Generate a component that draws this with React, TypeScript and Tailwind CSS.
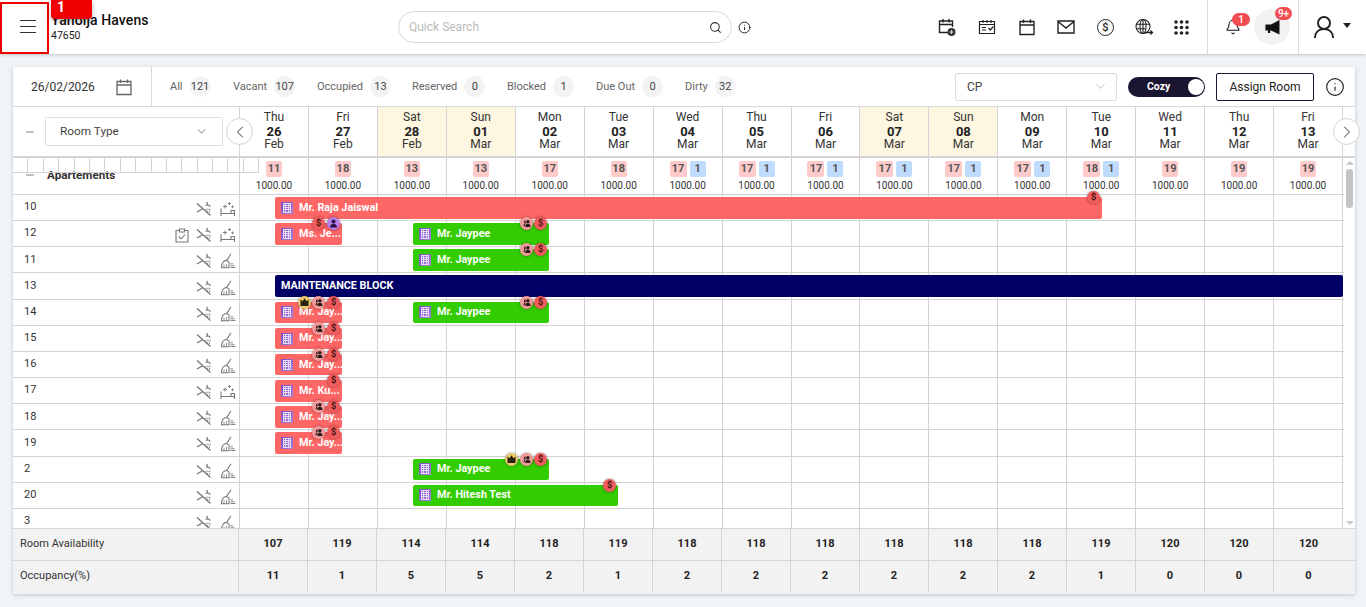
import React from "react";
import { ChevronDown, ChevronLeft, ChevronRight, Search, Info, Bell, Minus } from "lucide-react";

const days = [
  ["Thu", "26", "Feb"], ["Fri", "27", "Feb"], ["Sat", "28", "Feb"], ["Sun", "01", "Mar"],
  ["Mon", "02", "Mar"], ["Tue", "03", "Mar"], ["Wed", "04", "Mar"], ["Thu", "05", "Mar"],
  ["Fri", "06", "Mar"], ["Sat", "07", "Mar"], ["Sun", "08", "Mar"], ["Mon", "09", "Mar"],
  ["Tue", "10", "Mar"], ["Wed", "11", "Mar"], ["Thu", "12", "Mar"], ["Fri", "13", "Mar"],
];
const pink = [11, 18, 13, 13, 17, 18, 17, 17, 17, 17, 17, 17, 18, 19, 19, 19];
const blue = [0, 0, 0, 0, 0, 0, 1, 1, 1, 1, 1, 1, 1, 0, 0, 0];
const avail = [107, 119, 114, 114, 118, 119, 118, 118, 118, 118, 118, 118, 119, 120, 120, 120];
const occ = [11, 1, 5, 5, 2, 1, 2, 2, 2, 2, 2, 2, 1, 0, 0, 0];

type BadgeKind = "crown" | "people" | "dollar" | "guest";
type Bar = { name: string; color: "red" | "green" | "navy"; pos: string; badges: [BadgeKind, string][] };
type Row = { no: string; clean: "bed" | "broom"; clip?: boolean; bars: Bar[] };

const jaypee = (badges: [BadgeKind, string][]): Bar => ({
  name: "Mr. Jaypee", color: "green", pos: "left-[400px] w-[136px]", badges,
});
const short = (name: string, badges: [BadgeKind, string][]): Bar => ({
  name, color: "red", pos: "left-[262px] w-[67px]", badges,
});
const pd: [BadgeKind, string][] = [["people", "left-[37px]"], ["dollar", "left-[52px]"]];
const jpd: [BadgeKind, string][] = [["people", "left-[107px]"], ["dollar", "left-[121px]"]];

const rows: Row[] = [
  { no: "10", clean: "bed", bars: [{ name: "Mr. Raja Jaiswal", color: "red", pos: "left-[262px] w-[827px]", badges: [["dollar", "left-[812px]"]] }] },
  { no: "12", clean: "bed", clip: true, bars: [short("Ms. Je...", [["dollar", "left-[37px]"], ["guest", "left-[52px]"]]), jaypee(jpd)] },
  { no: "11", clean: "broom", bars: [jaypee(jpd)] },
  { no: "13", clean: "broom", bars: [{ name: "MAINTENANCE BLOCK", color: "navy", pos: "left-[262px] w-[1068px]", badges: [] }] },
  { no: "14", clean: "broom", bars: [short("Mr. Jay...", [["crown", "left-[23px]"], ...pd]), jaypee(jpd)] },
  { no: "15", clean: "broom", bars: [short("Mr. Jay...", pd)] },
  { no: "16", clean: "broom", bars: [short("Mr. Jay...", pd)] },
  { no: "17", clean: "bed", bars: [short("Mr. Ku...", [["dollar", "left-[52px]"]])] },
  { no: "18", clean: "broom", bars: [short("Mr. Jay...", pd)] },
  { no: "19", clean: "broom", bars: [short("Mr. Jay...", pd)] },
  { no: "2", clean: "broom", bars: [jaypee([["crown", "left-[92px]"], ...jpd])] },
  { no: "20", clean: "broom", bars: [{ name: "Mr. Hitesh Test", color: "green", pos: "left-[400px] w-[205px]", badges: [["dollar", "left-[190px]"]] }] },
  { no: "3", clean: "broom", bars: [] },
];

const barColor = { red: "bg-[#ff6666]", green: "bg-[#33cc00]", navy: "bg-[#000066]" };

function CalPlus() {
  return (
    <svg width="20" height="20" viewBox="0 0 20 20" fill="none" stroke="#222" strokeWidth="1.4">
      <path d="M11 15.500H2.500V4h13v6M2.500 7.500h13M6 2v3.500M12 2v3.500" />
      <circle cx="14.500" cy="15" r="4" fill="#333" stroke="none" />
      <path d="M12.500 15h4M14.500 13v4" stroke="#ddd" strokeWidth="1" />
    </svg>
  );
}
function CalCheck() {
  return (
    <svg width="18" height="16" viewBox="0 0 18 16" fill="none" stroke="#222" strokeWidth="1.2">
      <path d="M1.500 2.500h15v12h-15zM1.500 5.500h15M5 1v3M9 1v3M13 1v3" />
      <path d="M4 8.500h4M4 11h4M10.500 9l1.800 2 3-3.500" />
    </svg>
  );
}
function Cal({ size = 18, color = "#222", sw = 1.4 }: { size?: number; color?: string; sw?: number }) {
  return (
    <svg width={size} height={size} viewBox="0 0 18 18" fill="none" stroke={color} strokeWidth={sw}>
      <path d="M2 3.500h14v13H2zM2 7h14M5.500 1.500v3.500M12.500 1.500v3.500" />
    </svg>
  );
}
function Mail() {
  return (
    <svg width="18" height="14" viewBox="0 0 18 14" fill="none" stroke="#222" strokeWidth="1.4">
      <path d="M1 1h16v12H1zM1 1.500l8 6.500 8-6.500" />
    </svg>
  );
}
function Globe() {
  return (
    <svg width="20" height="20" viewBox="0 0 20 20" fill="none" stroke="#222" strokeWidth="1.1">
      <circle cx="9" cy="9.500" r="7" />
      <ellipse cx="9" cy="9.500" rx="3" ry="7" />
      <path d="M9 2.500v14M2.300 7.200h13.400M2.300 11.800h9" />
      <path d="M11 15.500h7.500M16.500 13.500l2 2-2 2" strokeWidth="1.300" fill="#fff" />
    </svg>
  );
}
function Dots() {
  const c = [2, 7.500, 13];
  return (
    <svg width="15" height="15" viewBox="0 0 15 15" fill="#222">
      {c.map((y) => c.map((x) => <circle key={`${x}-${y}`} cx={x} cy={y} r="1.800" />))}
    </svg>
  );
}
function Megaphone() {
  return (
    <svg width="15" height="15" viewBox="0 0 15 15" fill="#111">
      <path d="M14.500 0v14.500L6 10.500H5.200V13H3v-2.500H1A.6.6 0 0 1 .4 10V5a.6.6 0 0 1 .6-.6h5z" />
    </svg>
  );
}
function User() {
  return (
    <svg width="22" height="24" viewBox="0 0 22 24" fill="none" stroke="#222" strokeWidth="2">
      <circle cx="11" cy="8" r="6" />
      <path d="M2 23c0-5.500 3.500-9 9-9s9 3.500 9 9" />
    </svg>
  );
}
function NoSmoke() {
  return (
    <svg width="16" height="16" viewBox="0 0 16 16" fill="none" stroke="#777" strokeWidth="1.300">
      <path d="M1 2.500l13.500 12M1 11l6-3.500" />
      <path d="M11.500 1c-1.500 1 .5 1.700-.5 3 1.300-.3 3 .3 3 1.700" />
      <path d="M9.500 8.500h5M11 11h3.500" strokeDasharray="1 1" />
    </svg>
  );
}
function BedSpark() {
  return (
    <svg width="16" height="16" viewBox="0 0 16 16" fill="none" stroke="#777" strokeWidth="1.050">
      <path d="M1 7.500V15M1 12.500h13.500V15M11 12.500V9.500h3.500v3" />
      <path d="M5 3.500v4M3 5.500h4M9.500 1v3M8 2.500h3M12.500 4.500v2.600M11.200 5.800h2.600" strokeWidth=".9" />
    </svg>
  );
}
function Broom() {
  return (
    <svg width="16" height="16" viewBox="0 0 16 16" fill="none" stroke="#777" strokeWidth="1.050">
      <path d="M11 .8L6.600 7.600" />
      <path d="M1.500 14.700c0-4 2-7.300 5-7.300l2.500 1.600v5.700z" />
      <path d="M4 14.500v-3M6.500 14.500v-3.500" strokeWidth=".8" />
      <path d="M10.500 10.800h2.500M10.500 12.800h4M10.500 14.500h5" strokeWidth=".9" />
    </svg>
  );
}
function Clipboard() {
  return (
    <svg width="14" height="15" viewBox="0 0 14 15" fill="none" stroke="#777" strokeWidth="1.100">
      <path d="M4.500 2.500H1v11.500h12V2.500H9.500M4.500 1h5v3h-5z" />
      <path d="M3.800 8.500l2.300 2.300 4-4.300" />
    </svg>
  );
}
function Building() {
  return (
    <span className="flex h-[12px] w-[12px] shrink-0 items-center justify-center rounded-[1px] bg-gradient-to-br from-[#7a4cc4] to-[#a583dc]">
      <svg width="8" height="10" viewBox="0 0 8 10" fill="#e6dcf5">
        <path d="M0 0h8v10H0zM1 1v1h1V1zm2 0v1h2V1zm3 0v1h1V1zM1 3v1h1V3zm2 0v1h2V3zm3 0v1h1V3zM1 5v1h1V5zm2 0v1h2V5zm3 0v1h1V5zM1 7v2h1V7zm2 0v2h2V7zm3 0v2h1V7z" fillRule="evenodd" />
      </svg>
    </span>
  );
}
function Badge({ kind, pos }: { kind: BadgeKind; pos: string }) {
  const bg = {
    dollar: "bg-[#f25b5b]",
    people: "bg-[#f29a9a]",
    crown: "bg-[#ecc96c]",
    guest: "bg-[#b77fe8]",
  }[kind];
  return (
    <span className={`absolute top-[-6px] flex h-[13px] w-[13px] items-center justify-center rounded-full shadow-[0_0_3px_rgba(0,0,0,0.45)] ${bg} ${pos}`}>
      {kind === "dollar" && <span className="text-[9px] leading-none font-bold text-[#3a1414]">$</span>}
      {kind === "people" && (
        <svg width="8" height="7" viewBox="0 0 9 8" fill="#2a1a1a">
          <circle cx="5.500" cy="2" r="1.900" />
          <path d="M2.500 8c0-2.500 1-3.700 3-3.700S8.500 5.500 8.500 8z" />
          <path d="M3 .6A1.700 1.700 0 0 0 2.500 4C1.200 4.300.5 5.500.5 7H2c0-1.500.4-2.700 1.300-3.500A2.600 2.600 0 0 1 3 .6z" />
        </svg>
      )}
      {kind === "crown" && (
        <svg width="9" height="8" viewBox="0 0 9 8" fill="#2a2210">
          <path d="M.5 1.500l2 1.700L4.500.3l2 2.900 2-1.700V8h-8z" />
        </svg>
      )}
      {kind === "guest" && (
        <svg width="9" height="9" viewBox="0 0 9 9" fill="#2a1040">
          <circle cx="4.500" cy="2.500" r="2" />
          <path d="M1 8.500c0-2.500 1.300-3.500 3.500-3.500S8 6 8 8.500z" />
        </svg>
      )}
    </span>
  );
}

function Header() {
  return (
    <header className="relative z-20 flex h-[54px] shrink-0 items-center bg-white shadow-[0_1px_3px_rgba(0,0,0,0.2)]">
      <button className="mt-[2px] flex h-[52px] w-[49px] shrink-0 items-center justify-center border-2 border-[#ee0000] pb-[4px] pl-[6px]">
        <span className="flex w-[16px] flex-col gap-[5px]">
          <span className="h-px bg-[#333]" />
          <span className="h-px bg-[#333]" />
          <span className="h-px bg-[#333]" />
        </span>
      </button>
      <div className="relative ml-[2px] w-[347px] shrink-0">
        <div className="text-[14px] leading-[17px] font-medium tracking-[0.1px] text-[#111]">Yanolja Havens</div>
        <div className="text-[10.500px] leading-[13px] text-[#222]">47650</div>
        <span className="absolute top-[-12px] left-0 flex h-[19px] w-[41px] items-start rounded-b-[4px] bg-[#f00000] pl-[6px] text-[14px] leading-[15px] font-bold text-white shadow-[0_2px_5px_rgba(0,0,0,0.3)]">1</span>
      </div>
      <div className="flex h-[32px] w-[334px] shrink-0 items-center justify-between rounded-full border border-[#d9d9d9] pr-[9px] pl-[10px]">
        <span className="text-[12px] text-[#bbbbbb]">Quick Search</span>
        <Search size={13} strokeWidth={2} className="text-[#333]" />
      </div>
      <Info size={13} strokeWidth={1.800} className="ml-[6px] text-[#222]" />
      <div className="ml-[176px] flex w-[280px] shrink-0 items-center">
        <span className="flex w-[40px] shrink-0 justify-center"><CalPlus /></span>
        <span className="flex w-[40px] shrink-0 justify-center"><CalCheck /></span>
        <span className="flex w-[39px] shrink-0 justify-center"><Cal /></span>
        <span className="flex w-[40px] shrink-0 justify-center"><Mail /></span>
        <span className="flex w-[39px] shrink-0 justify-center">
          <span className="flex h-[17px] w-[17px] items-center justify-center rounded-full border-[1.400px] border-[#222] text-[11px] leading-none font-medium text-[#222]">$</span>
        </span>
        <span className="flex w-[38px] shrink-0 justify-center"><Globe /></span>
        <span className="flex w-[36px] shrink-0 justify-center"><Dots /></span>
      </div>
      <div className="h-full w-px shrink-0 bg-[#dddddd]" />
      <div className="relative flex w-[46px] shrink-0 justify-center pl-[4px]">
        <Bell size={16} strokeWidth={1.600} className="text-[#111]" />
        <span className="absolute top-[-6px] left-[24px] flex h-[13px] w-[18px] items-center justify-center rounded-full bg-[#f24b50] text-[10px] leading-none font-medium text-white">1</span>
      </div>
      <div className="relative flex h-[36px] w-[36px] shrink-0 items-center justify-center rounded-full bg-[#f2f2f2]">
        <Megaphone />
        <span className="absolute top-[-2px] left-[21px] flex h-[13px] w-[17px] items-center justify-center rounded-full bg-[#f24b50] text-[10px] leading-none font-medium text-white">9+</span>
      </div>
      <div className="ml-[8px] h-full w-px shrink-0 bg-[#dddddd]" />
      <div className="ml-[14px] flex items-center gap-[8px]">
        <User />
        <span className="mb-[4px] h-0 w-0 border-x-[4px] border-t-[5px] border-x-transparent border-t-[#222]" />
      </div>
    </header>
  );
}

function Filter({ label, count, w }: { label: string; count: string; w: string }) {
  return (
    <div className={`flex shrink-0 items-center gap-[7px] ${w}`}>
      <span className="pt-[1px] text-[#666]">{label}</span>
      <span className="flex h-[21px] min-w-[21px] items-center justify-center rounded-full bg-[#f3f3f3] pt-[1px] text-[#444]">{count}</span>
    </div>
  );
}

function Toolbar() {
  return (
    <div className="flex h-[40px] shrink-0 items-center border-b border-[#d8d8d8]">
      <div className="flex h-full w-[139px] shrink-0 items-center justify-between border-r border-[#d8d8d8] pr-[18px] pl-[18px]">
        <span className="text-[12px] text-[#333]">26/02/2026</span>
        <Cal size={18} color="#666" sw={1.300} />
      </div>
      <div className="ml-[18px] flex w-[570px] shrink-0 items-center text-[11px]">
        <Filter label="All" count="121" w="w-[63px]" />
        <Filter label="Vacant" count="107" w="w-[84px]" />
        <Filter label="Occupied" count="13" w="w-[95px]" />
        <Filter label="Reserved" count="0" w="w-[95px]" />
        <Filter label="Blocked" count="1" w="w-[89px]" />
        <Filter label="Due Out" count="0" w="w-[89px]" />
        <Filter label="Dirty" count="32" w="w-[55px]" />
      </div>
      <div className="ml-[215px] flex h-[28px] w-[162px] shrink-0 items-center justify-between rounded-[2px] border border-[#dddddd] pr-[8px] pl-[11px] text-[12px] text-[#444]">
        CP
        <ChevronDown size={15} strokeWidth={1} className="text-[#999]" />
      </div>
      <div className="relative ml-[11px] flex h-[20px] w-[77px] shrink-0 items-center rounded-full bg-[#1a1530] pl-[19px] text-[10.500px] font-bold text-white">
        Cozy
        <span className="absolute top-[2px] right-[1px] h-[16px] w-[16px] rounded-full bg-white" />
      </div>
      <button className="ml-[11px] h-[28px] w-[98px] shrink-0 rounded-[2px] border border-[#1a1530] text-[12px] text-[#222]">Assign Room</button>
      <Info size={20} strokeWidth={1.400} className="ml-[11px] text-[#222]" />
    </div>
  );
}

function DateHeader() {
  return (
    <div className="relative grid h-[51px] shrink-0 grid-cols-[227px_repeat(16,68.950px)] border-b-2 border-[#d4d4d8]">
      <div className="flex items-center border-r border-[#d4d4d8] pl-[11px]">
        <Minus size={12} strokeWidth={1.500} className="text-[#555]" />
        <div className="ml-[9px] flex h-[29px] w-[178px] items-center justify-between rounded-[2px] border border-[#dddddd] pr-[14px] pl-[14px] text-[11.800px] text-[#444]">
          Room Type
          <ChevronDown size={13} strokeWidth={1.500} className="text-[#555]" />
        </div>
      </div>
      {days.map((d, i) => (
        <div key={i} className={`flex flex-col items-center border-r border-[#d4d4d8] pt-[4px] text-[12px] leading-[13.500px] text-[#333] ${d[0] === "Sat" || d[0] === "Sun" ? "bg-[#fdf6e0]" : ""}`}>
          <span>{d[0]}</span>
          <span className="text-[13px] font-bold text-[#222]">{d[1]}</span>
          <span>{d[2]}</span>
        </div>
      ))}
      <button className="absolute top-[11px] left-[213px] flex h-[27px] w-[27px] items-center justify-center rounded-full border border-[#d4d4d4] bg-white">
        <ChevronLeft size={20} strokeWidth={1.200} className="text-[#333]" />
      </button>
      <button className="absolute top-[11px] left-[1320px] z-10 flex h-[27px] w-[27px] items-center justify-center rounded-full border border-[#d4d4d4] bg-white">
        <ChevronRight size={20} strokeWidth={1.200} className="text-[#333]" />
      </button>
    </div>
  );
}

function StatsRow() {
  return (
    <div className="relative grid h-[37px] shrink-0 grid-cols-[227px_repeat(16,68.950px)] border-b border-[#d4d4d8]">
      <div className="flex items-end border-r border-[#d4d4d8] pb-[12px] pl-[11px]">
        <Minus size={12} strokeWidth={1.500} className="mb-[1px] text-[#555]" />
        <span className="ml-[11px] text-[11.700px] leading-[14px] font-bold text-[#333]">Apartements</span>
      </div>
      {days.map((_, i) => (
        <div key={i} className="flex flex-col items-center border-r border-[#d4d4d8] pt-[3px]">
          <div className="flex h-[16px] gap-[3px]">
            <span className={`flex h-[16px] items-center justify-center rounded-[2px] bg-[#fecaca] text-[11px] font-bold text-[#555] ${blue[i] ? "w-[17px]" : "w-[16px]"}`}>{pink[i]}</span>
            {blue[i] > 0 && <span className="flex h-[16px] w-[16px] items-center justify-center rounded-[2px] bg-[#bfdbfe] text-[11px] font-bold text-[#555]">{blue[i]}</span>}
          </div>
          <span className="mt-[2px] text-[10px] leading-[14px] text-[#333]">1000.00</span>
        </div>
      ))}
      <div className="absolute top-0 left-0 flex h-[15px] border-b border-[#d4d4d8]">
        {Array.from({ length: 16 }, (_, i) => (
          <span key={i} className="h-full w-[15.400px] border-r border-[#d4d4d8]" />
        ))}
      </div>
    </div>
  );
}

function RoomRow({ row }: { row: Row }) {
  return (
    <div className="relative grid h-[26.170px] shrink-0 grid-cols-[227px_repeat(16,68.950px)] border-b border-[#d4d4d8]">
      <div className="flex items-center border-r border-[#d4d4d8] pr-[3px] pl-[11px] text-[11px] text-[#333]">
        <span className="flex-1">{row.no}</span>
        {row.clip && <span className="mt-[3px] mr-[7px]"><Clipboard /></span>}
        <span className="mt-[3px] mr-[8px]"><NoSmoke /></span>
        <span className="mt-[3px]">{row.clean === "bed" ? <BedSpark /> : <Broom />}</span>
      </div>
      {days.map((_, i) => (
        <div key={i} className="border-r border-[#d4d4d8]" />
      ))}
      {row.bars.map((b, i) => (
        <div key={i} className={`absolute top-[2px] flex h-[21.500px] items-center rounded-[2px] pl-[6px] text-[10.800px] font-bold whitespace-nowrap text-white ${barColor[b.color]} ${b.pos}`}>
          {b.color !== "navy" && <span className="mr-[6px]"><Building /></span>}
          <span>{b.name}</span>
          {b.badges.map(([k, p]) => <Badge key={k} kind={k} pos={p} />)}
        </div>
      ))}
    </div>
  );
}

function FooterRow({ label, values, extra }: { label: string; values: number[]; extra: string }) {
  return (
    <div className={`grid grid-cols-[226px_repeat(16,69px)] ${extra}`}>
      <div className="flex items-center border-r border-[#d4d4d8] pl-[7px]">{label}</div>
      {values.map((v, i) => (
        <div key={i} className={`flex items-center justify-center font-bold text-[#222] ${i < 15 ? "border-r border-[#d4d4d8]" : ""}`}>{v}</div>
      ))}
    </div>
  );
}

function Footer() {
  return (
    <div className="flex h-[66px] shrink-0 flex-col bg-[#f2f2f2] text-[11px] text-[#333]">
      <FooterRow label="Room Availability" values={avail} extra="h-[33px] border-y border-[#d4d4d8]" />
      <FooterRow label="Occupancy(%)" values={occ} extra="h-[33px] pb-[2px]" />
    </div>
  );
}

export default function App() {
  return (
    <div className="flex h-[607px] w-[1366px] flex-col overflow-hidden bg-[#f0f4f8] [font-family:Roboto,sans-serif]">
      <Header />
      <main className="mt-[13px] ml-[13px] flex h-[527px] w-[1342px] flex-col bg-white shadow-[0_1px_4px_rgba(0,0,0,0.2)]">
        <Toolbar />
        <DateHeader />
        <div className="flex h-[370px] shrink-0">
          <div className="flex w-[1331px] shrink-0 flex-col overflow-hidden">
            <StatsRow />
            {rows.map((r) => <RoomRow key={r.no} row={r} />)}
          </div>
          <div className="flex w-[11px] shrink-0 flex-col items-center pt-[3px] pb-[3px]">
            <span className="h-0 w-0 border-x-[4px] border-b-[4px] border-x-transparent border-b-[#c8c8c8]" />
            <span className="mt-[4px] h-[39px] w-[7px] rounded-[3px] bg-[#c4c4c4]" />
            <span className="mt-auto h-0 w-0 border-x-[4px] border-t-[4px] border-x-transparent border-t-[#c8c8c8]" />
          </div>
        </div>
        <Footer />
      </main>
    </div>
  );
}
